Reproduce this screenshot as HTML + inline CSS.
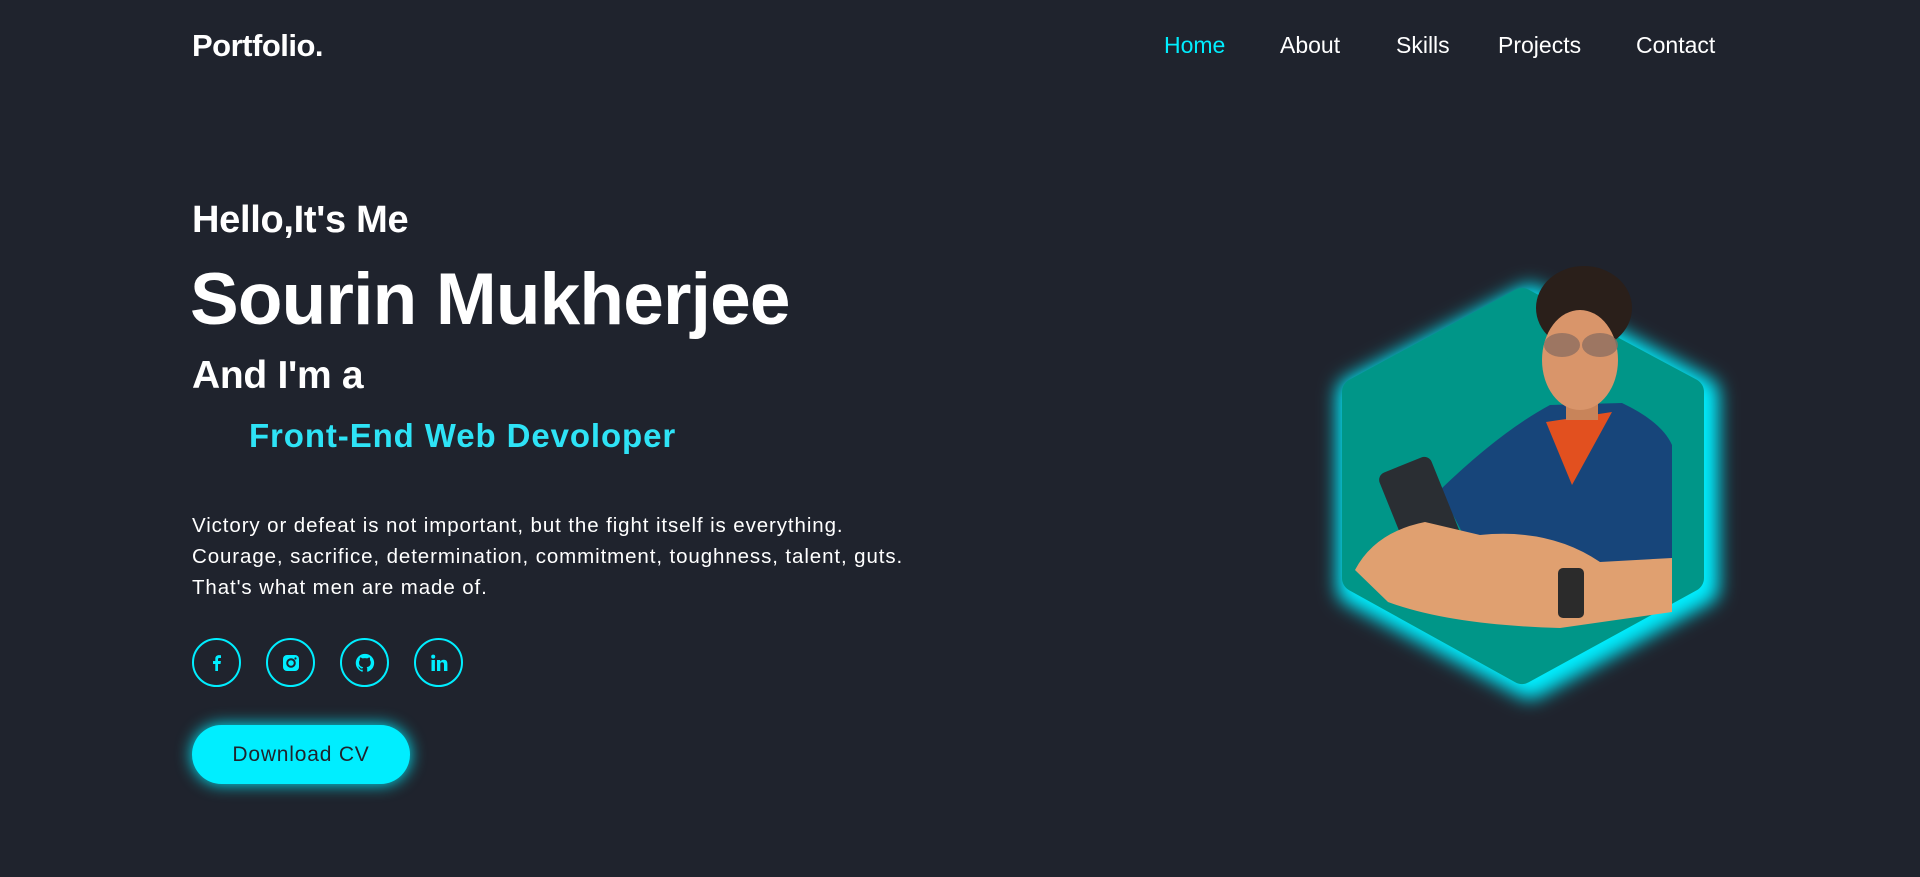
<!DOCTYPE html>
<html><head><meta charset="utf-8"><style>
*{margin:0;padding:0;box-sizing:border-box}
body{width:1920px;height:877px;background:#1f232d;font-family:"Liberation Sans",sans-serif;color:#fff;position:relative;overflow:hidden}
.a{position:absolute;white-space:nowrap}
.nav{top:32px;font-size:23px;letter-spacing:0px}
.ic{position:absolute;top:638px;width:49px;height:49px;border:2px solid #00eeff;border-radius:50%;display:flex;align-items:center;justify-content:center}
</style></head><body>
<div class="a" style="left:192px;top:28px;font-size:31px;font-weight:bold;letter-spacing:-0.5px">Portfolio.</div>
<div class="a nav" style="left:1164px;color:#00eeff">Home</div>
<div class="a nav" style="left:1280px">About</div>
<div class="a nav" style="left:1396px">Skills</div>
<div class="a nav" style="left:1498px">Projects</div>
<div class="a nav" style="left:1636px">Contact</div>

<div class="a" style="left:192px;top:199px;font-size:38px;font-weight:bold;letter-spacing:-0.3px">Hello,It's Me</div>
<div class="a" style="left:190px;top:258px;font-size:73px;font-weight:bold;letter-spacing:-0.8px">Sourin Mukherjee</div>
<div class="a" style="left:192px;top:354px;font-size:39px;font-weight:bold;letter-spacing:-0.3px">And I'm a</div>
<div class="a" style="left:249px;top:417px;font-size:33px;font-weight:bold;color:#2ee3f6;letter-spacing:0.9px">Front-End Web Devoloper</div>
<div class="a" style="left:192px;top:510px;font-size:20.5px;line-height:31px;letter-spacing:0.9px">Victory or defeat is not important, but the fight itself is everything.<br>Courage, sacrifice, determination, commitment, toughness, talent, guts.<br>That's what men are made of.</div>

<div class="ic" style="left:192px"><svg width="20" height="20" viewBox="0 0 20 20"><path d="M11 18V11h2.5l.4-3H11V6.3c0-.8.3-1.3 1.4-1.3H14V2.3C13.6 2.2 12.8 2.1 12 2.1c-2 0-3.7 1.2-3.7 3.6V8H6v3h2.3v7z" fill="#00eeff"/></svg></div>
<div class="ic" style="left:266px"><svg width="20" height="20" viewBox="0 0 20 20"><rect x="2" y="2" width="16" height="16" rx="4" fill="#00eeff"/><circle cx="10" cy="10" r="3.8" fill="none" stroke="#1f232d" stroke-width="2"/><circle cx="14.5" cy="5.5" r="1.1" fill="#1f232d"/></svg></div>
<div class="ic" style="left:340px"><svg width="22" height="22" viewBox="0 0 24 24"><path d="M12 2a10 10 0 0 0-3.2 19.5c.5.1.7-.2.7-.5v-1.7c-2.8.6-3.4-1.3-3.4-1.300-.4-1.2-1.100-1.500-1.100-1.500-.9-.6.1-.6.1-.6 1 .1 1.500 1 1.500 1 .9 1.500 2.300 1.100 2.900.8.1-.6.3-1.100.6-1.300-2.200-.3-4.600-1.100-4.600-5 0-1.100.4-2 1-2.700-.1-.3-.4-1.300.1-2.700 0 0 .8-.3 2.800 1a9.600 9.600 0 0 1 5 0c1.900-1.300 2.800-1 2.800-1 .5 1.400.2 2.400.1 2.700.6.7 1 1.600 1 2.700 0 3.900-2.300 4.700-4.600 5 .4.3.7.9.7 1.900V21c0 .3.2.6.7.5A10 10 0 0 0 12 2z" fill="#00eeff"/></svg></div>
<div class="ic" style="left:414px"><svg width="20" height="20" viewBox="0 0 20 20"><rect x="2.5" y="7" width="3.4" height="11" fill="#00eeff"/><circle cx="4.2" cy="3.6" r="2" fill="#00eeff"/><path d="M8 7h3.2v1.6c.6-1 1.8-1.9 3.6-1.9 3 0 3.6 2 3.6 4.6V18H15v-5.7c0-1.4-.1-3-1.9-3S11.3 10.7 11.3 12V18H8z" fill="#00eeff"/></svg></div>

<div class="a" style="left:192px;top:725px;width:218px;height:59px;border-radius:30px;background:#00eeff;box-shadow:0 0 16px #00eeff;color:#1f232d;font-size:21px;letter-spacing:0.8px;display:flex;align-items:center;justify-content:center">Download CV</div>

<svg class="a" style="left:1300px;top:200px;overflow:visible" width="480" height="520" viewBox="0 0 480 520">
<defs><filter id="g" x="-30%" y="-30%" width="160%" height="160%"><feGaussianBlur stdDeviation="9"/></filter></defs>
<polygon points="226,96 398,188 398,382 226,476 50,382 50,188" fill="#00eeff" stroke="#00eeff" stroke-width="34" stroke-linejoin="round" filter="url(#g)" transform="translate(4,6)"/>
<polygon points="222,102 390,192 390,378 222,470 56,378 56,192" fill="#009688" stroke="#009688" stroke-width="28" stroke-linejoin="round"/>
<path d="M140 290 Q200 232 250 205 L322 203 Q362 222 372 245 L372 400 L200 405 Z" fill="#17457a"/>
<path d="M246 222 L312 212 L272 285 Z" fill="#e2501f"/>
<rect x="266" y="180" width="32" height="40" fill="#c8845a"/>
<ellipse cx="284" cy="108" rx="48" ry="42" fill="#2a1f1a"/>
<ellipse cx="280" cy="160" rx="38" ry="50" fill="#d9956a"/>
<ellipse cx="262" cy="145" rx="18" ry="12" fill="#8d6e60" opacity=".8"/>
<ellipse cx="300" cy="145" rx="18" ry="12" fill="#8d6e60" opacity=".8"/>
<rect x="92" y="262" width="56" height="96" rx="8" fill="#2a2e33" transform="rotate(-22 119 308)"/>
<path d="M55 370 Q75 332 125 322 L180 335 Q250 328 300 362 L372 358 L372 412 L260 428 Q150 425 88 402 Z" fill="#e0a070"/>
<rect x="258" y="368" width="26" height="50" rx="5" fill="#2b2b2b"/>
</svg>
</body></html>
